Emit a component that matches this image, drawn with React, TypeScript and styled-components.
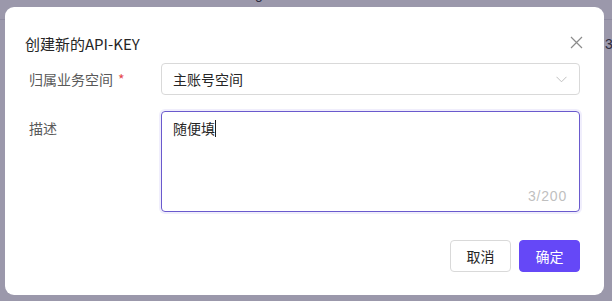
import React, { ReactElement } from 'react';
import styled, { createGlobalStyle } from 'styled-components';

const GlobalStyle = createGlobalStyle`
  html, body {
    margin: 0;
    padding: 0;
    width: 612px;
    height: 301px;
    overflow: hidden;
    font-family: "Microsoft YaHei", "Noto Sans CJK SC", "Noto Sans", sans-serif;
  }
`;

const Page = styled.div`
  width: 612px;
  height: 301px;
  background: #9b98ab;
  position: relative;
  overflow: hidden;
`;

const PageHeader = styled.div`
  height: 19px;
  border-bottom: 1px solid #8e8ba0;
  position: relative;
`;

const BehindText = styled.span<{ $left: number; $top: number }>`
  position: absolute;
  left: ${(p) => p.$left}px;
  top: ${(p) => p.$top}px;
  font-size: 14px;
  color: #2e2c3e;
  font-family: "Liberation Sans", sans-serif;
`;

const Overlay = styled.div`
  position: absolute;
  inset: 0;
  padding: 7px 8px 6px 5px;
  box-sizing: border-box;
  display: flex;
`;

const Dialog = styled.div`
  flex: 1;
  background: #ffffff;
  border-radius: 9px;
  padding: 25px 24px 23px 24px;
  box-sizing: border-box;
  display: flex;
  flex-direction: column;
  position: relative;
`;

const Title = styled.h2`
  margin: 0 0 0 -4px;
  font-size: 15px;
  font-weight: 400;
  line-height: 24px;
  color: #262626;
`;

const CloseButton = styled.button`
  position: absolute;
  top: 28px;
  right: 21px;
  width: 14px;
  height: 14px;
  padding: 0;
  border: none;
  background: none;
  cursor: pointer;
  display: flex;
  align-items: center;
  justify-content: center;
`;

const Form = styled.div`
  margin-top: 7px;
  display: flex;
  flex-direction: column;
  gap: 16px;
`;

const Row = styled.div<{ $top?: boolean }>`
  display: flex;
  align-items: ${(p) => (p.$top ? 'flex-start' : 'center')};
`;

const Label = styled.label<{ $pad?: number }>`
  width: 132px;
  flex-shrink: 0;
  font-size: 14px;
  line-height: 20px;
  color: #595959;
  padding-top: ${(p) => p.$pad ?? 0}px;
`;

const Required = styled.span`
  color: #e5484d;
  margin-left: 5px;
`;

const Select = styled.div`
  flex: 1;
  height: 32px;
  box-sizing: border-box;
  border: 1px solid #d9d9d9;
  border-radius: 4px;
  padding: 0 12px 0 11px;
  display: flex;
  align-items: center;
  justify-content: space-between;
  font-size: 14px;
  color: #262626;
`;

const TextArea = styled.div`
  flex: 1;
  height: 101px;
  box-sizing: border-box;
  border: 1px solid #6a5acd;
  border-radius: 4px;
  box-shadow: 0 0 0 2px rgba(106, 90, 230, 0.1);
  padding: 6px 11px;
  position: relative;
  font-size: 14px;
  line-height: 20px;
  color: #262626;
`;

const Caret = styled.span`
  display: inline-block;
  width: 1px;
  height: 17px;
  background: #1f1f1f;
  vertical-align: -3px;
`;

const Counter = styled.span`
  position: absolute;
  right: 12px;
  bottom: 5px;
  font-size: 14px;
  letter-spacing: 0.8px;
  color: #bfbfbf;
  font-family: "Liberation Sans", sans-serif;
`;

const Footer = styled.div`
  margin-top: 28px;
  display: flex;
  justify-content: flex-end;
  gap: 8px;
`;

const Button = styled.button<{ $primary?: boolean }>`
  width: 61px;
  height: 32px;
  border-radius: 4px;
  font-size: 14px;
  font-family: inherit;
  cursor: pointer;
  border: 1px solid ${(p) => (p.$primary ? '#6548f7' : '#d9d9d9')};
  background: ${(p) => (p.$primary ? '#6548f7' : '#ffffff')};
  color: ${(p) => (p.$primary ? '#ffffff' : '#262626')};
`;

const App: React.FC = (): ReactElement => {
  return (
    <>
      <GlobalStyle />
      <Page>
        <PageHeader>
          <BehindText $left={255} $top={-14}>
            g
          </BehindText>
          <BehindText $left={605} $top={36}>
            3:
          </BehindText>
        </PageHeader>
        <Overlay>
          <Dialog>
            <Title>创建新的API-KEY</Title>
            <CloseButton aria-label="close">
              <svg width="13" height="13" viewBox="0 0 13 13">
                <path d="M1 1 L12 12 M12 1 L1 12" stroke="#8c8c8c" strokeWidth="1.2" fill="none" />
              </svg>
            </CloseButton>
            <Form>
              <Row>
                <Label>
                  归属业务空间<Required>*</Required>
                </Label>
                <Select>
                  <span>主账号空间</span>
                  <svg width="11" height="7" viewBox="0 0 11 7">
                    <path d="M0.5 0.8 L5.5 5.8 L10.5 0.8" stroke="#bfbfbf" strokeWidth="1" fill="none" />
                  </svg>
                </Select>
              </Row>
              <Row $top>
                <Label $pad={7}>描述</Label>
                <TextArea>
                  随便填<Caret />
                  <Counter>3/200</Counter>
                </TextArea>
              </Row>
            </Form>
            <Footer>
              <Button>取消</Button>
              <Button $primary>确定</Button>
            </Footer>
          </Dialog>
        </Overlay>
      </Page>
    </>
  );
};

export default App;
